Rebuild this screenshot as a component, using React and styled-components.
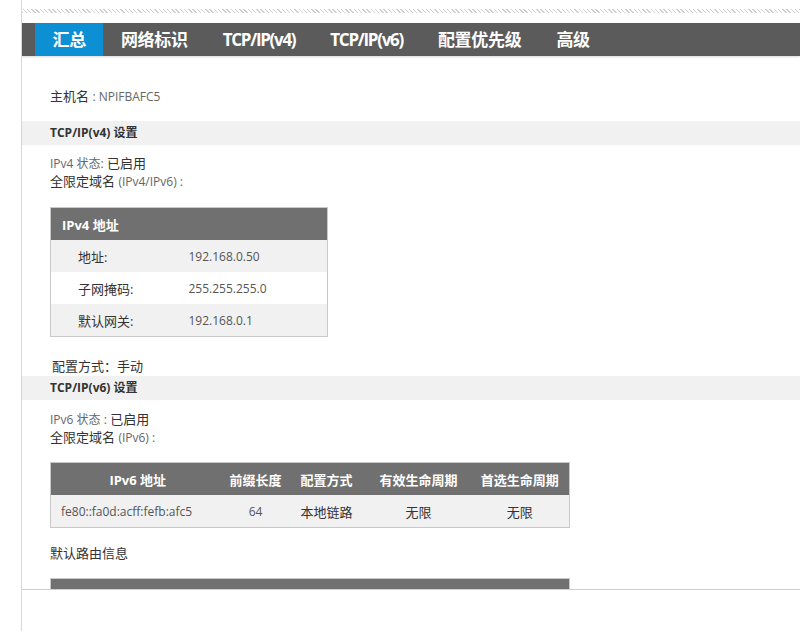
import React from 'react'
import styled, { createGlobalStyle } from 'styled-components'

const GlobalStyle = createGlobalStyle`
    html, body {
        margin: 0;
        padding: 0;
        background: #fff;
    }
    body {
        font-family: "Open Sans", "Noto Sans CJK SC", sans-serif;
        font-size: 13px;
        color: #333;
    }
`

const Page = styled.div`
    margin-left: 21px;
    border-left: 1px solid #d6d6d6;
    min-height: 631px;
`

const Frame = styled.div`
    height: 590px;
    overflow: hidden;
    border-bottom: 1px solid #cfcfcf;
    padding-top: 9px;
    box-sizing: border-box;
`

const Hatch = styled.div`
    height: 4px;
    background: repeating-linear-gradient(
        45deg,
        #cfcfcf 0 1px,
        #fff 1px 3px
    );
`

const Nav = styled.div`
    margin-top: 10px;
    height: 33px;
    background: #5b5b5b;
    display: flex;
    padding-left: 13px;
    box-shadow: 0 1px 2px rgba(0, 0, 0, 0.15);
`

const Tab = styled.div`
    padding: 0 17.5px;
    line-height: 33px;
    font-size: 17px;
    font-weight: 700;
    color: #fff;
    letter-spacing: ${(p) => (p.latin ? '-1.3px' : '-0.3px')};
    background: ${(p) => (p.active ? '#0d8fd4' : 'transparent')};
`

const Content = styled.div`
    padding-top: 31px;
`

const Line = styled.div`
    padding-left: ${(p) => (p.indent ? 30 : 28)}px;
    height: 18px;
    line-height: 18px;
    margin-top: ${(p) => p.top || 0}px;
    color: #333;
`

const Muted = styled.span`
    color: #666;
    font-size: 12px;
    line-height: 1;
`

const Band = styled.div`
    margin-top: ${(p) => p.top || 0}px;
    background: #f1f1f1;
    height: 24px;
    line-height: 24px;
    padding-left: 28px;
    font-size: 12px;
    font-weight: 700;
    color: #333;
`

const TableWrap = styled.div`
    padding-left: 28px;
    margin-top: ${(p) => p.top || 0}px;
`

const Table = styled.table`
    border-collapse: collapse;
    border: 1px solid #c9c9c9;
    width: ${(p) => p.width}px;
    table-layout: fixed;
`

const Th = styled.th`
    background: #707070;
    color: #fff;
    font-weight: 700;
    font-size: 13px;
    height: 32px;
    padding: 0 ${(p) => (p.left ? 11 : 0)}px;
    text-align: ${(p) => (p.left ? 'left' : 'center')};
    white-space: nowrap;
`

const Tr = styled.tr`
    background: ${(p) => (p.shade ? '#f1f1f1' : '#fff')};
`

const Td = styled.td`
    height: 32px;
    padding: 0 0 0 ${(p) => p.pad || 0}px;
    text-align: ${(p) => (p.center ? 'center' : 'left')};
    color: ${(p) => (p.value ? '#555' : '#333')};
    font-size: ${(p) => (p.value ? 12 : 13)}px;
`

const ipv4Rows = [
    ['地址:', '192.168.0.50'],
    ['子网掩码:', '255.255.255.0'],
    ['默认网关:', '192.168.0.1'],
]

const tabs = ['汇总', '网络标识', 'TCP/IP(v4)', 'TCP/IP(v6)', '配置优先级', '高级']

const App = () => {
    return (
        <>
            <GlobalStyle />
            <Page>
                <Frame>
                    <Hatch />
                    <Nav>
                        {tabs.map((t, i) => (
                            <Tab key={t} active={i === 0} latin={t.startsWith('TCP')}>{t}</Tab>
                        ))}
                    </Nav>
                    <Content>
                        <Line>主机名 <Muted>: NPIFBAFC5</Muted></Line>

                        <Band top={16}>TCP/IP(v4) 设置</Band>
                        <Line top={9}><Muted>IPv4 状态:</Muted> 已启用</Line>
                        <Line>全限定域名 <Muted>(IPv4/IPv6) :</Muted></Line>

                        <TableWrap top={17}>
                            <Table width={278}>
                                <colgroup>
                                    <col style={{ width: 138 }} />
                                    <col />
                                </colgroup>
                                <thead>
                                    <tr>
                                        <Th left colSpan={2}>IPv4 地址</Th>
                                    </tr>
                                </thead>
                                <tbody>
                                    {ipv4Rows.map(([k, v], i) => (
                                        <Tr key={k} shade={i % 2 === 0}>
                                            <Td pad={27}>{k}</Td>
                                            <Td value>{v}</Td>
                                        </Tr>
                                    ))}
                                </tbody>
                            </Table>
                        </TableWrap>

                        <Line indent top={20}>配置方式：手动</Line>

                        <Band top={1}>TCP/IP(v6) 设置</Band>
                        <Line top={10}><Muted>IPv6 状态 :</Muted> 已启用</Line>
                        <Line>全限定域名 <Muted>(IPv6) :</Muted></Line>

                        <TableWrap top={16}>
                            <Table width={520}>
                                <colgroup>
                                    <col style={{ width: 174 }} />
                                    <col style={{ width: 62 }} />
                                    <col style={{ width: 80 }} />
                                    <col style={{ width: 104 }} />
                                    <col />
                                </colgroup>
                                <thead>
                                    <tr>
                                        <Th>IPv6 地址</Th>
                                        <Th>前缀长度</Th>
                                        <Th>配置方式</Th>
                                        <Th>有效生命周期</Th>
                                        <Th>首选生命周期</Th>
                                    </tr>
                                </thead>
                                <tbody>
                                    <Tr shade>
                                        <Td pad={10} value>fe80::fa0d:acff:fefb:afc5</Td>
                                        <Td center value>64</Td>
                                        <Td center>本地链路</Td>
                                        <Td center>无限</Td>
                                        <Td center>无限</Td>
                                    </Tr>
                                </tbody>
                            </Table>
                        </TableWrap>

                        <Line top={16}>默认路由信息</Line>

                        <TableWrap top={16}>
                            <Table width={520}>
                                <colgroup>
                                    <col style={{ width: 174 }} />
                                    <col />
                                </colgroup>
                                <thead>
                                    <tr>
                                        <Th>IPv6 地址</Th>
                                        <Th>生命周期剩余时间</Th>
                                    </tr>
                                </thead>
                            </Table>
                        </TableWrap>
                    </Content>
                </Frame>
            </Page>
        </>
    )
}

export default App
